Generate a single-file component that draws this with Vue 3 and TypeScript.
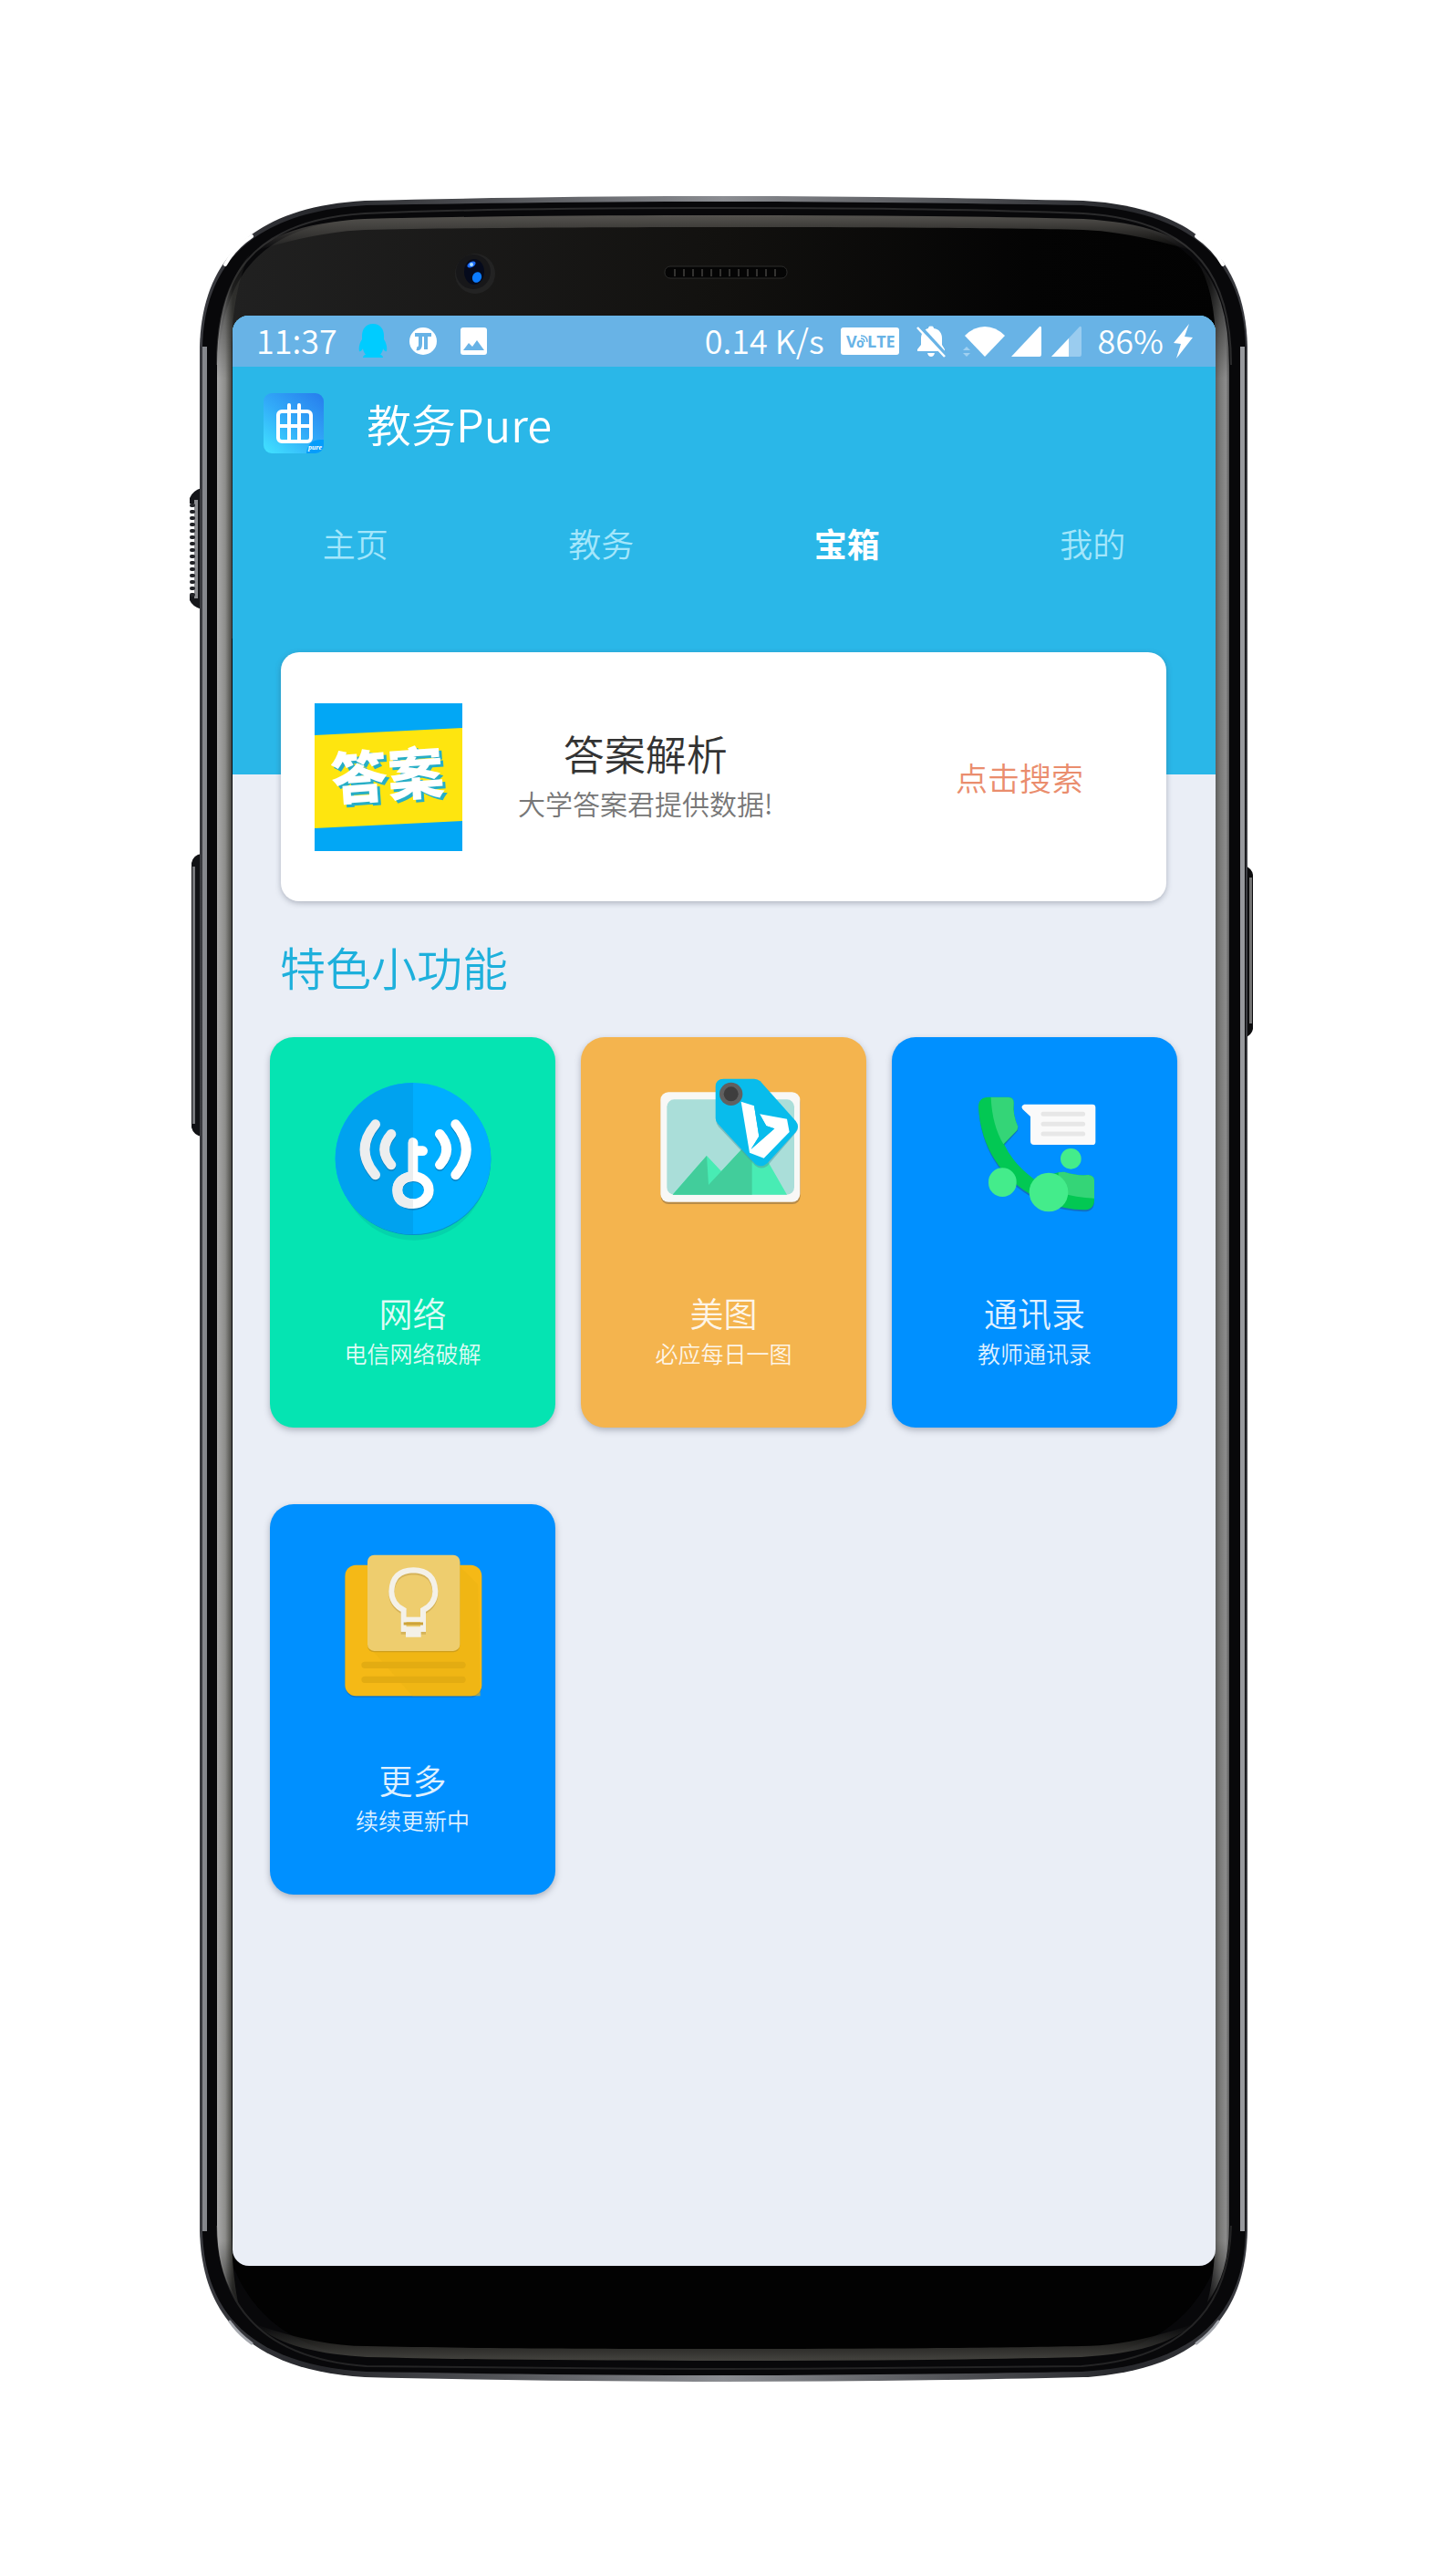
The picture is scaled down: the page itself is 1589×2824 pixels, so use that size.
<script setup lang="ts">
import { ref } from 'vue'

interface Tile {
  id: string
  title: string
  note: string
  color: string
  viewBox: string
}

const tabs: string[] = ['主页', '教务', '宝箱', '我的']
const active = ref('宝箱')

const tiles: Tile[] = [
  { id: 'network', title: '网络', note: '电信网络破解', color: 'green', viewBox: '217 140 600 600' },
  { id: 'picture', title: '美图', note: '必应每日一图', color: 'orange', viewBox: '191 140 600 600' },
  { id: 'contacts', title: '通讯录', note: '教师通讯录', color: 'blue', viewBox: '223 140 600 600' },
  { id: 'more', title: '更多', note: '续续更新中', color: 'blue', viewBox: '217 146 600 600' },
]

const ribs: number[] = Array.from({ length: 15 }, (_, i) => 552 + i * 7)
const slots: number[] = Array.from({ length: 12 }, (_, i) => 739 + i * 10)
</script>

<template>
  <div class="page">
    <div class="phone">
      <svg class="frame" viewBox="208 215 1173 2396" preserveAspectRatio="none" aria-hidden="true">
        <defs>
          <linearGradient id="face" x1="0" x2="1" y1="0" y2="0">
            <stop offset="0" stop-color="#212121" />
            <stop offset="0.5" stop-color="#12110f" />
            <stop offset="0.8" stop-color="#040404" />
            <stop offset="1" stop-color="#020202" />
          </linearGradient>
          <linearGradient id="railLeft" x1="0" x2="1" y1="0" y2="0">
            <stop offset="0" stop-color="#a9a9a9" />
            <stop offset="0.25" stop-color="#8d8d8b" />
            <stop offset="0.48" stop-color="#3f3f3a" />
          </linearGradient>
          <linearGradient id="railRight" x1="0" x2="1" y1="0" y2="0">
            <stop offset="0.4" stop-color="#383838" />
            <stop offset="0.7" stop-color="#777775" />
            <stop offset="0.9" stop-color="#8c8c8c" />
            <stop offset="1" stop-color="#5a5a5a" />
          </linearGradient>
          <linearGradient id="railFade" gradientUnits="userSpaceOnUse" x1="0" x2="0" y1="280" y2="2524">
            <stop offset="0" stop-color="#222" />
            <stop offset="0.02" stop-color="#777" />
            <stop offset="0.06" stop-color="#fff" />
            <stop offset="0.97" stop-color="#fff" />
            <stop offset="1" stop-color="#666" />
          </linearGradient>
          <mask id="railMask" maskUnits="userSpaceOnUse" x="208" y="215" width="1173" height="2396">
            <rect x="208" y="215" width="1173" height="2396" fill="url(#railFade)" />
          </mask>
          <linearGradient id="edge" x1="0" x2="1" y1="0" y2="0">
            <stop offset="0" stop-color="#3a3b40" />
            <stop offset="0.12" stop-color="#26272b" />
            <stop offset="0.5" stop-color="#8b8d92" />
            <stop offset="0.88" stop-color="#26272b" />
            <stop offset="1" stop-color="#3a3b40" />
          </linearGradient>
          <linearGradient id="topGlow" x1="0" x2="0" y1="0" y2="1">
            <stop offset="0" stop-color="#55534f" />
            <stop offset="1" stop-color="#55534f" stop-opacity="0" />
          </linearGradient>
          <linearGradient id="bottomGlow" x1="0" x2="0" y1="1" y2="0">
            <stop offset="0" stop-color="#44433f" />
            <stop offset="1" stop-color="#44433f" stop-opacity="0" />
          </linearGradient>
        </defs>

        <!-- side keys -->
        <path d="M221 535Q211 538 208 546V552H214V652H208V658Q211 665 221 668Z" fill="#15161a" />
        <rect x="213" y="548" width="4" height="108" fill="#8b8c90" />
        <rect v-for="y in ribs" :key="y" x="208" :y="y" width="6" height="4" rx="2" fill="#222327" />
        <path d="M221 936Q212 937 210 946V1236Q212 1244 221 1246Z" fill="#111215" />
        <rect x="211" y="950" width="3" height="282" fill="#77787c" />
        <path d="M1365 949Q1373 952 1374 959V1128Q1373 1134 1365 1138Z" fill="#0c0c0e" />
        <rect x="1370" y="962" width="3" height="160" fill="#737373" />

        <!-- body -->
        <path
          d="M219 380C221 300 260 228 400 220C520 217 660 215 794 215C928 215 1068 217 1188 220C1328 228 1366 300 1368 380V2446C1366 2526 1328 2598 1188 2606C1068 2609 928 2611 794 2611C660 2611 520 2609 400 2606C260 2598 221 2526 219 2446Z"
          fill="url(#edge)"
        />
        <path
          d="M222 380C224 302 263 233 402 225C520 223 660 221 794 221C928 221 1068 223 1186 225C1325 233 1364 302 1366 380V2446C1364 2524 1325 2592 1186 2600C1068 2602 928 2604 794 2604C660 2604 520 2602 402 2600C263 2592 224 2524 222 2446Z"
          fill="#08080a"
        />
        <rect x="222" y="380" width="5" height="2066" fill="#85878c" />
        <rect x="1360" y="380" width="5" height="2066" fill="#96989c" />
        <path d="M247 290Q257 272 276 259" fill="none" stroke="#fff" stroke-width="4" stroke-linecap="round" />
        <path d="M1341 290Q1331 272 1312 259" fill="none" stroke="#fff" stroke-width="4" stroke-linecap="round" />
        <path d="M252 2545Q261 2558 276 2569" fill="none" stroke="#a4a7ad" stroke-width="3" stroke-linecap="round" />
        <path d="M1336 2545Q1327 2558 1312 2569" fill="none" stroke="#a4a7ad" stroke-width="3" stroke-linecap="round" />
        <path
          d="M238 400C238 310 270 242 400 234C520 229 660 228 794 228C928 228 1068 229 1188 234C1318 242 1350 310 1350 400"
          fill="none"
          stroke="#2b2b2c"
          stroke-width="2"
        />
        <path
          d="M238 2440C240 2520 280 2585 402 2594C520 2596 660 2597 794 2597C928 2597 1068 2596 1186 2594C1308 2585 1348 2520 1350 2440"
          fill="none"
          stroke="#242425"
          stroke-width="2"
        />

        <!-- front glass -->
        <path
          d="M240 400C242 310 280 246 400 240C520 237 660 236 794 236C928 236 1068 237 1188 240C1308 246 1346 310 1348 400V700H240Z"
          fill="url(#face)"
        />
        <path
          d="M280 275C306 252 350 243 400 240C520 237 660 236 794 236C928 236 1068 237 1188 240C1238 243 1282 252 1308 275Q1240 254 1188 252C1000 248 588 248 400 252Q348 254 280 275Z"
          fill="url(#topGlow)"
        />
        <path
          d="M240 2400C242 2510 300 2576 402 2584C520 2587 660 2588 794 2588C928 2588 1068 2587 1186 2584C1288 2576 1346 2510 1348 2400Z"
          fill="#020202"
        />
        <path
          d="M280 2548C306 2572 352 2581 402 2584C520 2587 660 2588 794 2588C928 2588 1068 2587 1186 2584C1236 2581 1282 2572 1308 2548Q1240 2572 1186 2572C1000 2576 588 2576 402 2572Q348 2572 280 2548Z"
          fill="url(#bottomGlow)"
        />

        <!-- inner rails -->
        <g mask="url(#railMask)">
          <path d="M274 278Q238 322 238 400V2440Q238 2492 261 2524Q254 2490 254 2440V380Q255 318 274 278Z" fill="url(#railLeft)" />
          <path d="M1312 285Q1348 322 1348 400V2440Q1348 2492 1324 2524Q1333 2490 1333 2440V380Q1333 318 1312 285Z" fill="url(#railRight)" />
        </g>

        <!-- camera -->
        <ellipse cx="521" cy="300" rx="22" ry="22" fill="#232323" />
        <circle cx="519" cy="298" r="19" fill="#171719" />
        <ellipse cx="520" cy="298" rx="11" ry="14" fill="#050a1c" />
        <ellipse cx="517" cy="290" rx="5" ry="3" fill="#1c6dff" transform="rotate(-30 517 290)" />
        <circle cx="517" cy="290" r="2" fill="#a9dcff" />
        <ellipse cx="523" cy="304" rx="5" ry="6" fill="#0b7bff" transform="rotate(25 523 304)" />

        <!-- earpiece -->
        <rect x="729" y="292" width="134" height="13" rx="6" fill="#050505" stroke="#2c2c2b" />
        <rect v-for="x in slots" :key="x" :x="x" y="295" width="2" height="8" fill="#333230" />
      </svg>

      <main class="screen">
        <header class="header">
          <div class="status">
            <div class="status-side left">
              <span class="status-text">11:37</span>
              <svg width="32" height="38" viewBox="0 0 32 38" aria-label="QQ">
                <path
                  d="M16 0C8 0 4 6 4 13V17C2 20 0 25 1 30C2 31 4 29 5 27C5 30 7 32 8 34C6 34 5 36 5 37H27C27 36 26 34 24 34C25 32 27 30 27 27C28 29 30 31 31 30C32 25 30 20 28 17V13C28 6 24 0 16 0Z"
                  fill="#00ccff"
                />
              </svg>
              <svg width="32" height="32" viewBox="0 0 32 32" aria-label="Pi">
                <circle cx="16" cy="16" r="15" fill="#fff" />
                <path d="M7 9H25M13 9V19Q13 25 9 24M19 9V25" fill="none" stroke="#68b3e6" stroke-width="4" />
              </svg>
              <svg width="32" height="32" viewBox="0 0 32 32" aria-label="图片">
                <rect x="2" y="1" width="29" height="30" rx="3" fill="#fff" />
                <path d="M5 26L11 18L15 22L20 15L28 26Z" fill="#68b3e6" />
              </svg>
            </div>
            <div class="status-side right">
              <span class="status-text">0.14 K/s</span>
              <svg width="64" height="32" viewBox="0 0 64 32" aria-label="VoLTE">
                <rect y="1" width="64" height="30" rx="3" fill="#fff" />
                <g class="volte">
                  <text x="6" y="23">V</text>
                  <text x="17" y="23" class="small">o</text>
                  <text x="29" y="23">LTE</text>
                </g>
                <path d="M22 13Q26 13 26 17M22 10Q29 10 29 17" fill="none" stroke="#68b3e6" stroke-width="1.5" />
              </svg>
              <svg width="34" height="36" viewBox="0 0 34 36" aria-label="静音">
                <path d="M17 2C18 1 20 2 20 4C26 5 29 9 29 15V22L32 27V29H2V27L6 22V15C6 10 9 5 14 4C14 2 16 1 17 2Z" fill="#fff" />
                <path d="M13 31H21Q20 35 17 35Q14 35 13 31Z" fill="#fff" />
                <path d="M3 0L36 36" stroke="#68b3e6" stroke-width="4" />
                <path d="M2 3L32 35" stroke="#fff" stroke-width="2.5" />
              </svg>
              <svg width="130" height="36" viewBox="0 0 130 36" aria-label="信号">
                <path d="M24 35L2 12Q12 2 24 2Q36 2 46 12Z" fill="#fff" />
                <path d="M0 28L4 24L8 28ZM0 31L4 35L8 31Z" fill="#a0d0f1" />
                <path d="M53 35L84 2Q86 1 86 4V32Q86 35 84 35Z" fill="#fff" />
                <path d="M97 35L128 2Q130 1 130 4V32Q130 35 128 35Z" fill="#9accef" />
                <path d="M97 35L116 15V35Z" fill="#fff" />
              </svg>
              <span class="battery">
                <span class="status-text">86%</span>
                <svg width="22" height="38" viewBox="0 0 22 38" aria-label="充电中">
                  <path d="M18 0L1 21L9 22L4 38L22 15L13 14Z" fill="#fff" />
                </svg>
              </span>
            </div>
          </div>

          <div class="appbar">
            <svg class="logo" viewBox="0 0 66 66" aria-hidden="true">
              <defs>
                <linearGradient id="logoBg" x1="0.1" y1="1" x2="0.9" y2="0">
                  <stop offset="0" stop-color="#40dfff" />
                  <stop offset="0.5" stop-color="#32aaf8" />
                  <stop offset="1" stop-color="#2880ee" />
                </linearGradient>
                <clipPath id="logoClip"><rect width="66" height="66" rx="9" /></clipPath>
              </defs>
              <g clip-path="url(#logoClip)">
                <rect width="66" height="66" fill="url(#logoBg)" />
                <path d="M47 66Q48 52 62 51H66V66Z" fill="#069dfb" />
                <text x="49" y="62" class="logo-text">pure</text>
              </g>
              <g fill="none" stroke="#fff" stroke-width="4" stroke-linecap="round">
                <rect x="16" y="20" width="36" height="33" rx="4" />
                <path d="M28 13V53M39 13V53M16 36H52" />
              </g>
            </svg>
            <h1>教务Pure</h1>
          </div>

          <nav class="tabs">
            <a
              v-for="tab in tabs"
              :key="tab"
              href="#"
              :class="{ active: tab === active }"
              @click.prevent="active = tab"
            >{{ tab }}</a>
          </nav>
        </header>

        <section class="card">
          <svg class="cover" viewBox="0 0 162 162" aria-hidden="true">
            <rect width="162" height="162" fill="#02a7f5" />
            <path d="M0 35L162 27V129L0 137Z" fill="#fee50f" />
            <g class="cover-text" transform="rotate(-4 81 81)">
              <text x="21" y="105" fill="#27aec6">答案</text>
              <text x="18" y="102" fill="#fff">答案</text>
            </g>
          </svg>
          <div class="card-text">
            <h2>答案解析</h2>
            <p>大学答案君提供数据!</p>
          </div>
          <button type="button" class="search">点击搜索</button>
        </section>

        <h2 class="section-title">特色小功能</h2>

        <section class="tiles">
          <button v-for="tile in tiles" :key="tile.id" type="button" class="tile" :class="tile.color">
            <svg class="tile-icon" :viewBox="tile.viewBox" aria-hidden="true">
              <g v-if="tile.id === 'network'">
                <ellipse cx="519" cy="464" rx="246" ry="254" fill="#05d3ab" />
                <ellipse cx="518" cy="452" rx="255" ry="249" fill="#078fc9" />
                <ellipse cx="517" cy="449" rx="256" ry="249" fill="#00aeff" />
                <path d="M517 200A256 249 0 0 0 517 698Z" fill="#00a2ef" />
                <g fill="none" stroke-width="32" stroke-linecap="round">
                  <path d="M393 337Q323 420 393 503M445 369Q401 420 445 470" stroke="#0686c8" transform="translate(0 5)" />
                  <path d="M657 337Q727 420 657 503M605 369Q649 420 605 470" stroke="#0686c8" transform="translate(0 5)" />
                  <path d="M393 337Q323 420 393 503M445 369Q401 420 445 470" stroke="#eceeef" />
                  <path d="M657 337Q727 420 657 503M605 369Q649 420 605 470" stroke="#fff" />
                  <ellipse cx="517" cy="557" rx="52" ry="46" stroke="#0686c8" />
                  <path d="M517 397V500" stroke="#fff" />
                  <path d="M525 424H549" stroke="#fff" />
                  <ellipse cx="517" cy="553" rx="52" ry="45" stroke="#fff" />
                </g>
                <path
                  d="M517 381Q501 381 501 397V494Q449 507 449 553Q449 614 517 614V582Q482 582 482 553Q482 524 517 524Z"
                  fill="#eceeef"
                />
              </g>

              <g v-else-if="tile.id === 'picture'">
                <rect x="283" y="240" width="459" height="359" rx="26" fill="#b88c48" />
                <rect x="282" y="231" width="459" height="361" rx="26" fill="#f8f8f6" />
                <rect x="303" y="255" width="419" height="313" rx="24" fill="#aaded9" />
                <path d="M322 568L434 440L482 491L560 407L630 450L698 568Z" fill="#48ecb4" />
                <path d="M322 568L434 440L440 536L560 407L583 440V568Z" fill="#42cd9b" />
                <path
                  d="M490 194H592Q603 194 611 202L727 328Q741 346 727 364L634 473Q614 488 594 473L473 345Q465 336 465 324V220Q465 194 490 194Z"
                  fill="#4a9aa3"
                  opacity="0.5"
                />
                <path
                  d="M490 187H590Q602 187 610 195L727 326Q741 344 727 362L634 464Q614 482 594 468L471 335Q463 326 463 316V213Q463 187 490 187Z"
                  fill="#08bcec"
                />
                <circle cx="514" cy="237" r="38" fill="#606060" />
                <circle cx="514" cy="237" r="24" fill="#3e3e3e" />
                <path d="M547 262L590 276L606 376L580 418L657 351L630 342L608 303L698 319L706 362L622 448L575 430Z" fill="#fff" />
                <path d="M590 276L606 376L580 418L657 351L630 342L608 303Z" fill="#08bcec" />
              </g>

              <g v-else-if="tile.id === 'contacts'">
                <path
                  d="M371 252H436Q452 252 452 268Q450 310 467 348L466 358L421 407Q450 470 520 522L600 498L622 500Q670 514 698 507Q718 509 718 526V590Q718 625 682 624Q560 620 462 542Q346 440 338 286Q337 252 371 252Z"
                  fill="#1b5b9b"
                  opacity="0.6"
                />
                <path
                  d="M371 247H436Q453 247 453 266Q449 305 467 345L464 356L421 402Q450 465 520 517L600 495L618 493Q670 508 698 503Q718 505 718 522V584Q718 619 682 618Q560 614 462 535Q346 435 337 281Q336 247 371 247Z"
                  fill="#02c853"
                />
                <path d="M378 248H436Q453 248 453 266Q449 305 467 345L464 356L419 402Q382 340 378 248Z" fill="#34d577" />
                <path d="M600 495L618 493Q670 508 698 503Q718 505 718 522V580Q660 578 600 560Z" fill="#34d577" />
                <rect x="370" y="480" width="92" height="95" rx="46" fill="#44ec8b" />
                <circle cx="568" cy="560" r="64" fill="#44ec8b" />
                <circle cx="641" cy="450" r="34" fill="#44ec8b" />
                <path
                  d="M488 271H712Q722 271 722 281V394Q722 404 712 404H520Q508 404 508 392V311L483 288Q474 276 488 271Z"
                  fill="#fafafa"
                />
                <path d="M550 303H681M550 336H681M550 368H681" stroke="#e7e7e7" stroke-width="15" stroke-linecap="round" />
              </g>

              <g v-else>
                <rect x="293" y="260" width="450" height="431" rx="36" fill="#1166b4" opacity="0.6" />
                <rect x="293" y="256" width="450" height="431" rx="36" fill="#f5b916" />
                <path d="M382 535L672 262L730 320L738 687H515Z" fill="#edb314" opacity="0.65" />
                <path d="M358 585H679M358 633H679" stroke="#e3ac12" stroke-width="22" stroke-linecap="round" />
                <rect x="367" y="227" width="304" height="316" rx="22" fill="#cf9f1c" />
                <rect x="367" y="223" width="304" height="316" rx="22" fill="#eecd6e" />
                <path
                  d="M486 478V404Q446 384 446 343Q449 274 518 273Q587 274 590 343Q590 384 550 404V478"
                  fill="none"
                  stroke="#d5b35a"
                  stroke-width="18"
                  transform="translate(0 6)"
                />
                <path
                  d="M486 475V404Q446 384 446 343Q449 274 518 273Q587 274 590 343Q590 384 550 404V475"
                  fill="none"
                  stroke="#f4f1e8"
                  stroke-width="18"
                />
                <path d="M486 435H550" stroke="#f4f1e8" stroke-width="16" />
                <path d="M486 449H550" stroke="#cda33b" stroke-width="9" />
                <path d="M478 459H559V475H543V493H493V475H478Z" fill="#f4f1e8" />
              </g>
            </svg>
            <span class="tile-title">{{ tile.title }}</span>
            <span class="tile-note">{{ tile.note }}</span>
          </button>
        </section>
      </main>
    </div>
  </div>
</template>

<style>
body {
  margin: 0;
  background: #fff;
}
</style>

<style scoped>
.page {
  box-sizing: border-box;
  display: flex;
  min-height: 100vh;
  padding: 215px 220px 213px;
  background: #fff;
  font-family: "Noto Sans CJK SC", "Noto Sans", sans-serif;
  font-weight: 350;
}

.phone {
  position: relative;
  box-sizing: border-box;
  display: flex;
  flex: 1;
  min-width: 0;
  padding: 131px 36px 127px 35px;
}

.frame {
  position: absolute;
  top: 0;
  left: -12px;
  width: calc(100% + 24px);
  height: 100%;
}

.screen {
  position: relative;
  flex: 1;
  min-width: 0;
  overflow: hidden;
  border-radius: 18px;
  background: #eaeef6;
}

.header {
  padding-bottom: 185px;
  background: #2ab7e8;
  color: #fff;
}

.status {
  display: flex;
  align-items: center;
  justify-content: space-between;
  height: 56px;
  padding: 0 25px 0 26px;
  background: #68b3e6;
  font-size: 36px;
}

.status-text {
  padding-bottom: 4px;
  line-height: 52px;
}

.status-side {
  display: flex;
  align-items: center;
  white-space: nowrap;
}

.left {
  gap: 23px;
}

.right {
  gap: 18px;
}

.battery {
  display: flex;
  align-items: center;
  gap: 10px;
}

.volte {
  fill: #68b3e6;
  font: 700 18px "Open Sans", sans-serif;
}

.volte .small {
  font-size: 14px;
}

.appbar {
  display: flex;
  align-items: center;
  gap: 47px;
  padding: 29px 34px;
}

.logo {
  width: 66px;
  height: 66px;
}

.logo-text {
  fill: #fff;
  font: italic 700 8px "Liberation Serif", serif;
}

h1,
h2,
p {
  margin: 0;
  font-weight: 350;
}

h1 {
  font-size: 49px;
  line-height: 66px;
}

.tabs {
  display: grid;
  grid-template-columns: repeat(4, 1fr);
}

.tabs a {
  color: #a3e6fb;
  font-size: 36px;
  line-height: 138px;
  text-align: center;
  text-decoration: none;
}

.tabs a.active {
  color: #fff;
  font-weight: 700;
}

.card {
  position: relative;
  display: flex;
  align-items: center;
  box-sizing: border-box;
  min-height: 273px;
  margin: -134px 54px 0 53px;
  padding: 0 91px 0 37px;
  border-radius: 20px;
  background: #fff;
  box-shadow: 0 2px 6px rgba(60, 70, 90, 0.35);
}

.cover {
  flex: none;
  width: 162px;
  height: 162px;
}

.cover-text {
  font: 900 62px "Noto Sans CJK SC", sans-serif;
}

.card-text {
  display: flex;
  flex-direction: column;
  align-items: center;
  margin-left: 61px;
  padding-bottom: 4px;
}

.card-text h2 {
  color: #333;
  font-size: 45px;
  line-height: 60px;
}

.card-text p {
  color: #777;
  font-size: 30px;
  line-height: 48px;
}

button {
  margin: 0;
  padding: 0;
  border: 0;
  background: none;
  font-family: inherit;
  font-weight: 350;
  cursor: pointer;
}

.search {
  margin-left: auto;
  color: #ea8d6d;
  font-size: 35px;
  line-height: 48px;
}

.section-title {
  margin: 41px 52px 48px;
  color: #1eb0dc;
  font-size: 50px;
  line-height: 60px;
}

.tiles {
  display: grid;
  grid-template-columns: repeat(3, 1fr);
  gap: 84px 28px;
  margin: 0 42px 84px 41px;
}

.tile {
  display: flex;
  flex-direction: column;
  align-items: center;
  box-sizing: border-box;
  min-height: 428px;
  padding: 30px 0 56px;
  border-radius: 26px;
  color: rgba(255, 255, 255, 0.88);
  box-shadow: 0 3px 7px rgba(60, 70, 90, 0.35);
}

.green {
  background: #05e4b2;
}

.orange {
  background: #f4b44e;
}

.blue {
  background: #0090ff;
}

.tile-icon {
  width: 200px;
  height: 200px;
}

.tile-title {
  margin-top: 46px;
  font-size: 37px;
  line-height: 52px;
}

.tile-note {
  font-size: 25px;
  line-height: 36px;
}
</style>
